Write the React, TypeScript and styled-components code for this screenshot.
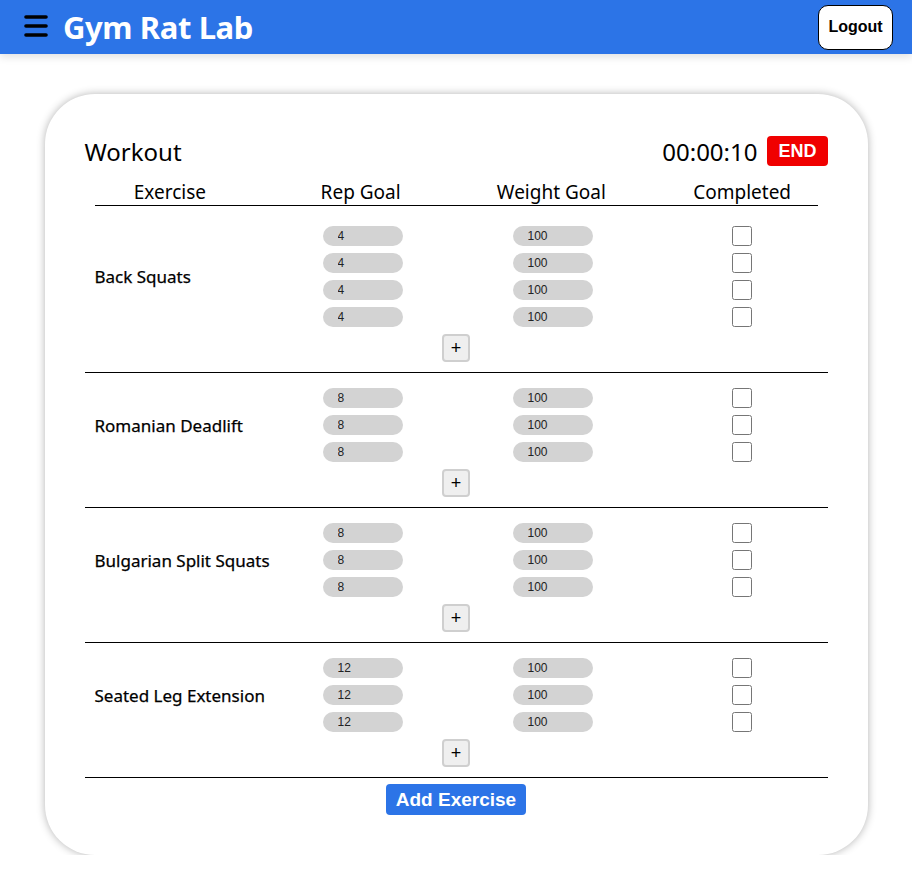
import React, { useState } from 'react';
import styled, { createGlobalStyle } from 'styled-components';

/* GLOBAL */
const GlobalStyle = createGlobalStyle`
  body {
    margin: 0;
    background: #ffffff;
    font-family: "Noto Sans", "Open Sans", sans-serif;
    color: #000;
  }
`;

/* DATA */
interface Exercise {
  name: string;
  reps: number[];
  weight: number;
}

const exercises: Exercise[] = [
  { name: 'Back Squats', reps: [4, 4, 4, 4], weight: 100 },
  { name: 'Romanian Deadlift', reps: [8, 8, 8], weight: 100 },
  { name: 'Bulgarian Split Squats', reps: [8, 8, 8], weight: 100 },
  { name: 'Seated Leg Extension', reps: [12, 12, 12], weight: 100 },
];

/* STYLES */
const NavBar = styled.header`
  display: flex;
  align-items: center;
  height: 54px;
  padding: 0 19px 0 22px;
  background: #2c74e7;
  box-shadow: 0 3px 8px rgba(0, 0, 0, 0.12);
`;

const MenuButton = styled.span`
  display: inline-flex;
  width: 28px;
  height: 28px;
  margin-right: 13px;
  cursor: pointer;
`;

const Brand = styled.h1`
  margin: 0;
  font-family: "Noto Sans", sans-serif;
  font-size: 31px;
  font-weight: 700;
  color: #fff;
  letter-spacing: -0.4px;
  flex: 1;
`;

const LogoutButton = styled.button`
  width: 75px;
  height: 45px;
  background: #fff;
  border: 1.5px solid #000;
  border-radius: 10px;
  font-family: "Liberation Sans", Arial, sans-serif;
  font-size: 16px;
  font-weight: 700;
  color: #000;
  cursor: pointer;
`;

const Card = styled.main`
  width: 823px;
  box-sizing: border-box;
  margin: 40px auto 0;
  padding: 40px 40px 40px;
  border-radius: 50px;
  background: #fff;
  box-shadow: 0 0 8px rgba(0, 0, 0, 0.3);
`;

const TitleRow = styled.div`
  display: flex;
  align-items: center;
  height: 34px;
`;

const Title = styled.h2`
  margin: 0;
  flex: 1;
  font-size: 24px;
  font-weight: 400;
`;

const Timer = styled.span`
  font-size: 24px;
  margin-right: 10px;
`;

const EndButton = styled.button`
  height: 30px;
  padding: 0 11px;
  background: #f00000;
  border: none;
  border-radius: 4px;
  font-family: "Liberation Sans", Arial, sans-serif;
  font-size: 18px;
  font-weight: 700;
  color: #fff;
  cursor: pointer;
`;

const HeadRow = styled.div`
  display: grid;
  grid-template-columns: repeat(4, 1fr);
  margin: 10px -10px 0;
  height: 27px;
  align-items: start;
`;

const HeadCell = styled.span`
  text-align: center;
  font-size: 19px;
  line-height: 28px;
`;

const HeadRule = styled.div`
  height: 1px;
  margin: 0 10px 5px;
  background: #000;
`;

const Section = styled.section`
  padding: 15px 0 10px;
  border-bottom: 1px solid #000;
`;

const SetsGrid = styled.div`
  display: grid;
  grid-template-columns: 198px 160px 220px 158px;
  align-items: center;
`;

const Name = styled.div`
  padding-left: 10px;
  font-size: 17px;
  font-weight: 400;
  -webkit-text-stroke: 0.25px #000;
`;

const Column = styled.div`
  display: flex;
  flex-direction: column;
  align-items: center;
  gap: 7px;
`;

const Pill = styled.input`
  width: 80px;
  height: 20px;
  box-sizing: border-box;
  padding: 0 0 0 15px;
  border: none;
  border-radius: 10px;
  background: #d3d3d3;
  font-family: "Liberation Sans", Arial, sans-serif;
  font-size: 12px;
  color: #222;
  outline: none;
`;

const Check = styled.input`
  width: 20px;
  height: 20px;
  margin: 0;
`;

const PlusRow = styled.div`
  display: flex;
  justify-content: center;
  margin-top: 7px;
`;

const PlusButton = styled.button`
  width: 28px;
  height: 28px;
  padding: 0;
  background: #efefef;
  border: 2px solid #cfcfcf;
  border-radius: 4px;
  font-family: "Liberation Sans", Arial, sans-serif;
  font-size: 18px;
  line-height: 1;
  color: #000;
  cursor: pointer;
`;

const Footer = styled.div`
  display: flex;
  justify-content: center;
  padding-top: 6px;
`;

const AddButton = styled.button`
  height: 31px;
  padding: 0 10px;
  background: #2c74e7;
  border: none;
  border-radius: 4px;
  font-family: "Liberation Sans", Arial, sans-serif;
  font-size: 19px;
  font-weight: 700;
  color: #fff;
  cursor: pointer;
`;

/* COMPONENTS */
function Hamburger() {
  return (
    <svg width="28" height="28" viewBox="0 0 28 28">
      <g stroke="#000" strokeWidth="3.6" strokeLinecap="round">
        <line x1="4" y1="4" x2="24" y2="4" />
        <line x1="4" y1="13" x2="24" y2="13" />
        <line x1="4" y1="22" x2="24" y2="22" />
      </g>
    </svg>
  );
}

function ExerciseSection({ exercise }: { exercise: Exercise }) {
  return (
    <Section>
      <SetsGrid>
        <Name>{exercise.name}</Name>
        <Column>
          {exercise.reps.map((r, i) => (
            <Pill key={i} defaultValue={r} />
          ))}
        </Column>
        <Column>
          {exercise.reps.map((_, i) => (
            <Pill key={i} defaultValue={exercise.weight} />
          ))}
        </Column>
        <Column>
          {exercise.reps.map((_, i) => (
            <Check key={i} type="checkbox" />
          ))}
        </Column>
      </SetsGrid>
      <PlusRow>
        <PlusButton>+</PlusButton>
      </PlusRow>
    </Section>
  );
}

export default function App() {
  const [seconds] = useState(10);
  const pad = (n: number) => String(n).padStart(2, '0');
  const time = `${pad(Math.floor(seconds / 3600))}:${pad(Math.floor(seconds / 60) % 60)}:${pad(seconds % 60)}`;

  return (
    <>
      <GlobalStyle />
      <NavBar>
        <MenuButton>
          <Hamburger />
        </MenuButton>
        <Brand>Gym Rat Lab</Brand>
        <LogoutButton>Logout</LogoutButton>
      </NavBar>
      <Card>
        <TitleRow>
          <Title>Workout</Title>
          <Timer>{time}</Timer>
          <EndButton>END</EndButton>
        </TitleRow>
        <HeadRow>
          <HeadCell>Exercise</HeadCell>
          <HeadCell>Rep Goal</HeadCell>
          <HeadCell>Weight Goal</HeadCell>
          <HeadCell>Completed</HeadCell>
        </HeadRow>
        <HeadRule />
        {exercises.map((ex) => (
          <ExerciseSection key={ex.name} exercise={ex} />
        ))}
        <Footer>
          <AddButton>Add Exercise</AddButton>
        </Footer>
      </Card>
    </>
  );
}
